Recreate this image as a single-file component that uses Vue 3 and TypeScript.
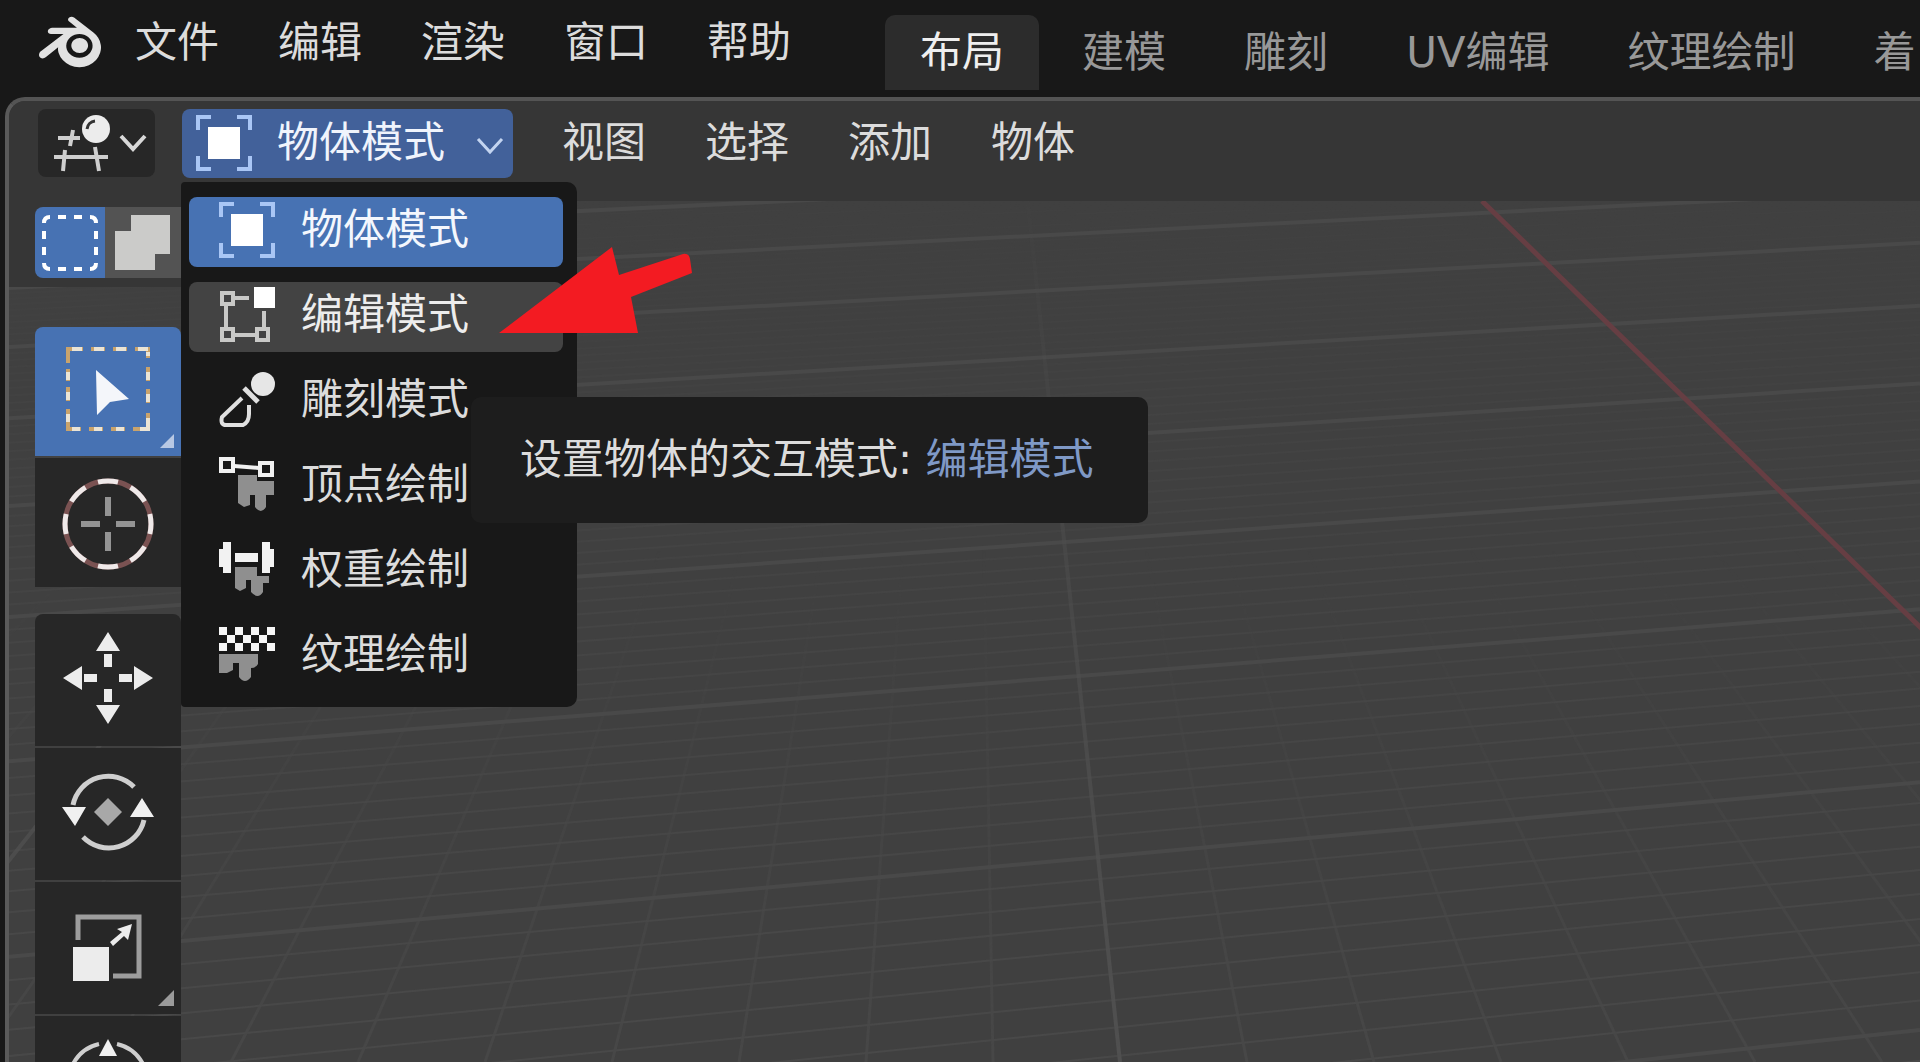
<script setup lang="ts">
import { ref } from 'vue'

interface Mode {
  id: string
  label: string
}

interface GridLine {
  x1: number
  y1: number
  x2: number
  y2: number
  major: boolean
}

const mainMenus: string[] = ['文件', '编辑', '渲染', '窗口', '帮助']
const workspaces: string[] = ['布局', '建模', '雕刻', 'UV编辑', '纹理绘制', '着']
const viewMenus: string[] = ['视图', '选择', '添加', '物体']
const modes: Mode[] = [
  { id: 'object', label: '物体模式' },
  { id: 'edit', label: '编辑模式' },
  { id: 'sculpt', label: '雕刻模式' },
  { id: 'vertex', label: '顶点绘制' },
  { id: 'weight', label: '权重绘制' },
  { id: 'texture', label: '纹理绘制' },
]

const activeWorkspace = ref('布局')
const activeMode = ref('object')
const hoveredMode = ref('edit')
const menuOpen = ref(true)

function labelOf(id: string): string {
  return modes.find((m) => m.id === id)?.label ?? ''
}

function chooseMode(id: string): void {
  activeMode.value = id
  menuOpen.value = false
}

// Floor lines running across the view, receding towards the horizon.
const crossLines: GridLine[] = []
for (let i = 0; i <= 90; i++) {
  const depth = 4.325 + i / 10
  const nearY = -353 + 6817 / depth
  const farY = -364 + 6447 / depth
  const slope = (farY - nearY) / 840
  crossLines.push({
    x1: 0,
    y1: nearY - slope * 1080,
    x2: 1920,
    y2: farY,
    major: i % 10 === 3,
  })
}

// Floor lines running away from the viewer, meeting at one vanishing point.
const depthLines: GridLine[] = []
for (let k = -26; k <= 24; k++) {
  if (k === 10) continue
  const spread = 152 + 127 * k
  depthLines.push({
    x1: 968 + (spread * 500) / 1417,
    y1: 145,
    x2: 968 + spread,
    y2: 1062,
    major: k % 10 === 0,
  })
}
const minorCross = crossLines.filter((l) => !l.major)
const minorDepth = depthLines.filter((l) => !l.major)
const majorCross = crossLines.filter((l) => l.major)
const majorDepth = depthLines.filter((l) => l.major)
</script>

<template>
  <div class="app">
    <header class="topbar">
      <svg class="logo" viewBox="0 0 24 24" aria-hidden="true">
        <path
          d="M12.51 13.214c.046-.8.438-1.506 1.03-2.006a3.424 3.424 0 0 1 2.212-.79c.85 0 1.631.3 2.211.79.592.5.983 1.206 1.028 2.005.045.823-.285 1.586-.865 2.153a3.389 3.389 0 0 1-2.374.938 3.393 3.393 0 0 1-2.376-.938c-.58-.567-.91-1.33-.865-2.152M7.35 14.831c.006.314.106.922.256 1.398a7.372 7.372 0 0 0 1.593 2.757 8.227 8.227 0 0 0 2.787 2.001 8.947 8.947 0 0 0 3.66.76 8.964 8.964 0 0 0 3.657-.772 8.285 8.285 0 0 0 2.785-2.01 7.428 7.428 0 0 0 1.592-2.762 6.964 6.964 0 0 0 .25-3.074 7.123 7.123 0 0 0-1.016-2.779 7.764 7.764 0 0 0-1.852-2.043h.002L13.566 2.55l-.02-.015c-.492-.378-1.319-.376-1.86.002-.547.382-.609 1.015-.123 1.415l-.001.001 3.126 2.543-9.53.01h-.013c-.788.001-1.545.518-1.695 1.172-.154.665.38 1.217 1.2 1.22V8.9l4.83-.01-8.62 6.617-.034.025c-.813.622-1.075 1.658-.563 2.313.52.667 1.625.668 2.447.004L7.414 14s-.069.52-.063.831zm12.09 1.741c-.97.988-2.326 1.548-3.795 1.55-1.47.004-2.827-.552-3.797-1.538a4.51 4.51 0 0 1-1.036-1.622 4.282 4.282 0 0 1 .282-3.519 4.702 4.702 0 0 1 1.153-1.371c.942-.768 2.141-1.183 3.396-1.185 1.256-.002 2.455.41 3.398 1.175.48.391.87.854 1.152 1.367a4.28 4.28 0 0 1 .522 1.706 4.236 4.236 0 0 1-.239 1.811 4.54 4.54 0 0 1-1.035 1.626"
        />
      </svg>
      <nav class="menus">
        <button v-for="m in mainMenus" :key="m" class="menu-button" type="button">{{ m }}</button>
      </nav>
      <nav class="tabs">
        <button
          v-for="w in workspaces"
          :key="w"
          class="tab"
          :class="{ 'tab--active': w === activeWorkspace }"
          type="button"
          @click="activeWorkspace = w"
        >
          {{ w }}
        </button>
      </nav>
    </header>

    <main class="editor">
      <svg class="grid" viewBox="9 101 1911 961" preserveAspectRatio="xMinYMin slice" aria-hidden="true">
        <defs>
          <linearGradient id="fade" x1="0" y1="201" x2="0" y2="1062" gradientUnits="userSpaceOnUse">
            <stop offset="0" stop-color="#fff" stop-opacity="0.05" />
            <stop offset="0.35" stop-color="#fff" stop-opacity="0.4" />
            <stop offset="1" stop-color="#fff" stop-opacity="1" />
          </linearGradient>
          <linearGradient id="fade-depth" x1="0" y1="550" x2="0" y2="1062" gradientUnits="userSpaceOnUse">
            <stop offset="0" stop-color="#fff" stop-opacity="0" />
            <stop offset="1" stop-color="#fff" stop-opacity="0.9" />
          </linearGradient>
          <mask id="floor" maskUnits="userSpaceOnUse" x="0" y="101" width="1920" height="961">
            <rect x="0" y="101" width="1920" height="961" fill="url(#fade)" />
          </mask>
          <mask id="floor-depth" maskUnits="userSpaceOnUse" x="0" y="101" width="1920" height="961">
            <rect x="0" y="101" width="1920" height="961" fill="url(#fade-depth)" />
          </mask>
        </defs>
        <g mask="url(#floor)" stroke="#494949" stroke-width="2">
          <line v-for="(l, i) in minorCross" :key="i" :x1="l.x1" :y1="l.y1" :x2="l.x2" :y2="l.y2" />
        </g>
        <g mask="url(#floor-depth)" stroke="#484848" stroke-width="3">
          <line v-for="(l, i) in minorDepth" :key="i" :x1="l.x1" :y1="l.y1" :x2="l.x2" :y2="l.y2" />
        </g>
        <g stroke="#494949" stroke-width="4">
          <line v-for="(l, i) in majorCross" :key="i" :x1="l.x1" :y1="l.y1" :x2="l.x2" :y2="l.y2" />
        </g>
        <g mask="url(#floor)" stroke="#505050" stroke-width="4">
          <line v-for="(l, i) in majorDepth" :key="i" :x1="l.x1" :y1="l.y1" :x2="l.x2" :y2="l.y2" />
        </g>
        <line x1="1482" y1="201" x2="1924" y2="631" stroke="#663e43" stroke-width="5" />
      </svg>

      <div class="view-header">
        <button class="editor-type" type="button" aria-label="编辑器类型">
          <svg width="56" height="58" viewBox="0 0 56 58" aria-hidden="true">
            <g fill="none" stroke="#cfcfcf" stroke-width="4">
              <path d="M0 43H54M4 24H26M19 16L16 32M11 36L9 57M41 33L45 57" />
            </g>
            <circle cx="42" cy="15" r="14" fill="#ececec" />
            <path d="M33 15a9 9 0 0 1 8-8" fill="none" stroke="#333" stroke-width="3" />
          </svg>
          <svg width="28" height="18" viewBox="0 0 28 18" aria-hidden="true">
            <path d="M2 2L14 15L26 2" fill="none" stroke="#d8d8d8" stroke-width="4" />
          </svg>
        </button>

        <div class="mode">
          <button
            class="mode-button"
            type="button"
            aria-haspopup="menu"
            :aria-expanded="menuOpen"
            @click="menuOpen = !menuOpen"
          >
            <svg width="56" height="56" viewBox="0 0 56 56" aria-hidden="true">
              <path d="M2 15V2H15M41 2H54V15M54 41V54H41M15 54H2V41" fill="none" stroke="#a9c6f5" stroke-width="4" />
              <rect x="12" y="12" width="32" height="32" fill="#fff" />
            </svg>
            <span class="mode-name">{{ labelOf(activeMode) }}</span>
            <svg class="mode-chevron" width="28" height="18" viewBox="0 0 28 18" aria-hidden="true">
              <path d="M2 2L14 15L26 2" fill="none" stroke="#c3d4f0" stroke-width="3" />
            </svg>
          </button>

          <ul v-if="menuOpen" class="mode-menu" role="menu">
            <li v-for="m in modes" :key="m.id" role="none">
              <button
                class="mode-item"
                :class="{
                  'mode-item--active': m.id === activeMode,
                  'mode-item--hover': m.id === hoveredMode && m.id !== activeMode,
                }"
                type="button"
                role="menuitem"
                @mouseenter="hoveredMode = m.id"
                @click="chooseMode(m.id)"
              >
                <svg width="56" height="56" viewBox="0 0 56 56" aria-hidden="true">
                  <template v-if="m.id === 'object'">
                    <path
                      d="M2 15V2H15M41 2H54V15M54 41V54H41M15 54H2V41"
                      fill="none"
                      stroke="#a9c6f5"
                      stroke-width="4"
                    />
                    <rect x="12" y="12" width="32" height="32" fill="#fff" />
                  </template>
                  <template v-else-if="m.id === 'edit'">
                    <g fill="none" stroke="#c9c9c7" stroke-width="4">
                      <path d="M16 11H30M7 19V40M15 48H36M45 24V40" />
                      <rect x="3" y="6" width="11" height="11" />
                      <rect x="3" y="42" width="11" height="11" />
                      <rect x="38" y="42" width="11" height="11" />
                    </g>
                    <rect x="35" y="0" width="21" height="21" fill="#fff" />
                  </template>
                  <template v-else-if="m.id === 'sculpt'">
                    <circle cx="44" cy="12" r="12" fill="#e6e6e6" />
                    <g fill="none" stroke="#e0e0e0" stroke-width="4">
                      <path d="M25 16L39 30" stroke-width="5" />
                      <path d="M23 26L3 45Q1 53 7 53H24Q30 50 30 42V33" />
                    </g>
                  </template>
                  <template v-else-if="m.id === 'vertex'">
                    <path
                      d="M19 18H38V24H55V38H47V50Q42 58 36 50V38H31V48L25 50L19 46Z"
                      fill="#8f8f8f"
                    />
                    <g fill="none" stroke="#f0f0f0" stroke-width="4">
                      <rect x="2" y="2" width="12" height="12" />
                      <rect x="41" y="6" width="12" height="12" />
                      <path d="M15 9L40 11" />
                    </g>
                  </template>
                  <template v-else-if="m.id === 'weight'">
                    <path d="M16 25H38V34H50V41H44V50Q39 58 32 50V38H27V46L21 49L16 46Z" fill="#8f8f8f" />
                    <path
                      d="M4 0H12V31H4V25H0V7H4ZM16 11H39V20H16ZM43 0H51V7H55V25H51V31H43Z"
                      fill="#f2f2f2"
                    />
                  </template>
                  <template v-else>
                    <path
                      d="M0 0h8v8h-8zM16 0h8v8h-8zM32 0h8v8h-8zM48 0h8v8h-8zM8 8h8v8h-8zM24 8h8v8h-8zM40 8h8v8h-8zM0 16h8v8h-8zM16 16h8v8h-8zM32 16h8v8h-8zM48 16h8v8h-8z"
                      fill="#f6f6f6"
                    />
                    <path d="M0 27H39V37Q37 41 32 41V50Q26 58 20 50V36H14V43L8 46H0Z" fill="#8f8f8f" />
                  </template>
                </svg>
                <span>{{ m.label }}</span>
              </button>
            </li>
          </ul>
        </div>

        <nav class="menus menus--view">
          <button v-for="m in viewMenus" :key="m" class="menu-button" type="button">{{ m }}</button>
        </nav>
      </div>

      <div class="tool-settings">
        <button class="select-mode select-mode--active" type="button" aria-label="设置新选择">
          <svg width="56" height="56" viewBox="0 0 56 56" aria-hidden="true">
            <path
              d="M2 8Q2 2 8 2M16 2H24M32 2H40M48 2Q54 2 54 8M54 16V24M54 32V40M54 48Q54 54 48 54M40 54H32M24 54H16M8 54Q2 54 2 48M2 40V32M2 24V16"
              fill="none"
              stroke="#fff"
              stroke-width="4"
            />
          </svg>
        </button>
        <button class="select-mode" type="button" aria-label="扩展选择">
          <svg width="56" height="56" viewBox="0 0 56 56" aria-hidden="true">
            <path d="M16 0H55V39H40V55H0V16H16Z" fill="#cbcbc9" />
          </svg>
        </button>
      </div>

      <div class="toolbar">
        <div class="tool-group tool-group--select">
          <button class="tool tool--active" type="button" aria-label="框选">
            <svg width="96" height="96" viewBox="0 0 96 96" aria-hidden="true">
              <g fill="none" stroke-width="4">
                <rect x="8" y="5" width="80" height="80" stroke="#c9a36c" />
                <path
                  d="M12 5H22M34 5H44M56 5H66M78 5H88M88 8V12M88 28V36M88 50V58M88 74V85H80M64 85H56M42 85H34M20 85H12M8 78V70M8 56V48M8 36V28"
                  stroke="#ebe4d5"
                />
                <path
                  d="M23 5H31M45 5H53M67 5H75M88 14V23M88 37V45M88 59V69M73 85H65M51 85H43M29 85H21M8 65V57M8 43V37M8 25V19"
                  stroke="#4772b3"
                />
              </g>
              <path d="M36 26L69 55L50 58L37 71Z" fill="#f4f6fa" />
            </svg>
            <svg class="corner" width="16" height="16" viewBox="0 0 16 16" aria-hidden="true">
              <path d="M16 2V16H2Z" fill="#b8c8e4" />
            </svg>
          </button>
          <button class="tool" type="button" aria-label="游标">
            <svg width="96" height="96" viewBox="0 0 96 96" aria-hidden="true">
              <circle cx="48" cy="49" r="43" fill="none" stroke="#7a5252" stroke-width="5" />
              <circle
                cx="48"
                cy="49"
                r="43"
                fill="none"
                stroke="#efe9e9"
                stroke-width="5"
                pathLength="160"
                stroke-dasharray="12 8"
                stroke-dashoffset="6"
              />
              <path d="M48 22V41M48 57V76M21 49H40M56 49H75" fill="none" stroke="#949494" stroke-width="6" />
            </svg>
          </button>
        </div>

        <div class="tool-group">
          <button class="tool" type="button" aria-label="移动">
            <svg width="96" height="96" viewBox="0 0 96 96" aria-hidden="true">
              <path
                d="M48 0L60 19H36ZM48 92L60 73H36ZM3 46L22 34V58ZM93 46L74 34V58ZM44 22H52V35H44ZM44 57H52V70H44ZM24 42H37V50H24ZM59 42H72V50H59Z"
                fill="#ececec"
              />
            </svg>
          </button>
          <button class="tool" type="button" aria-label="旋转">
            <svg width="96" height="96" viewBox="0 0 96 96" aria-hidden="true">
              <path d="M13 39A36 36 0 0 1 74 21M84 54A36 36 0 0 1 23 71" fill="none" stroke="#cfcfcf" stroke-width="5" />
              <path d="M2 41H26L15 60ZM70 51H94L82 32Z" fill="#f0f0f0" />
              <path d="M48 32L62 46L48 60L34 46Z" fill="#a8a8a8" />
            </svg>
          </button>
          <button class="tool" type="button" aria-label="缩放">
            <svg width="96" height="96" viewBox="0 0 96 96" aria-hidden="true">
              <path d="M18 40V17H79V76H53" fill="none" stroke="#9d9d9d" stroke-width="5" />
              <rect x="13" y="47" width="36" height="34" fill="#ececec" />
              <path d="M50 42L62 32L57 29L72 24L68 40L64 36L53 46Z" fill="#ececec" />
            </svg>
            <svg class="corner" width="16" height="16" viewBox="0 0 16 16" aria-hidden="true">
              <path d="M16 0V16H0Z" fill="#9a9a9a" />
            </svg>
          </button>
          <button class="tool" type="button" aria-label="变换">
            <svg width="96" height="96" viewBox="0 0 96 96" aria-hidden="true">
              <path d="M12 32A40 40 0 0 1 39 10M57 10A40 40 0 0 1 84 32" fill="none" stroke="#cfcfcf" stroke-width="4" />
              <path d="M48 5L57 22H39Z" fill="#f0f0f0" />
              <path d="M48 32L62 46L48 60L34 46Z" fill="#a8a8a8" />
            </svg>
          </button>
        </div>
      </div>

      <div v-if="menuOpen" class="tooltip" role="tooltip">
        设置物体的交互模式: <span class="tooltip-value">{{ labelOf(hoveredMode) }}</span>
      </div>

      <svg v-if="menuOpen" class="pointer" width="210" height="100" viewBox="0 0 210 100" aria-hidden="true">
        <path d="M9 93L122 7L129 35L193 14Q199 13 200 19L202 33L141 57L148 93Z" fill="#f31b22" />
      </svg>
    </main>
  </div>
</template>

<style>
body {
  margin: 0;
  background: #181818;
}
</style>

<style scoped>
.app {
  display: flex;
  flex-direction: column;
  height: 100vh;
  overflow: hidden;
  background: #181818;
  color: #dcdcdc;
  font-family: 'DejaVu Sans', 'Noto Sans CJK SC', sans-serif;
  font-size: 42px;
  line-height: 64px;
}

button {
  margin: 0;
  padding: 0;
  border: 0;
  background: none;
  color: inherit;
  font: inherit;
  white-space: nowrap;
  cursor: pointer;
}

svg {
  display: block;
  flex: none;
}

.topbar {
  display: flex;
  flex: none;
  height: 97px;
  padding-left: 39px;
  overflow: hidden;
}

.logo {
  width: 62px;
  height: 62px;
  margin-top: 11px;
  fill: #e2e2e2;
}

.menus {
  display: flex;
  flex: none;
  align-items: center;
  gap: 59px;
}

.topbar .menus {
  height: 86px;
  margin-left: 34px;
}

.menus--view {
  margin-left: 49px;
}

.tabs {
  display: flex;
  flex: none;
  gap: 8px;
  margin-left: 94px;
  padding-top: 15px;
}

.tab {
  height: 75px;
  padding: 0 35px;
  border-radius: 10px 10px 0 0;
  color: #989898;
}

.tab--active {
  background: #2c2c2c;
  color: #efefef;
}

.editor {
  position: relative;
  flex: 1;
  min-height: 0;
  margin-left: 5px;
  overflow: hidden;
  border-top: 4px solid #545454;
  border-left: 4px solid #5a5a5a;
  border-top-left-radius: 20px;
  background: #404040;
}

.grid {
  position: absolute;
  top: 0;
  left: 0;
  width: 100%;
  height: 100%;
}

.view-header {
  position: relative;
  z-index: 2;
  display: flex;
  align-items: center;
  height: 84px;
  padding: 0 0 16px 29px;
  background: #363636;
}

.editor-type {
  display: flex;
  align-items: center;
  gap: 9px;
  width: 117px;
  height: 68px;
  margin-right: 27px;
  padding-left: 16px;
  border-radius: 8px;
  background: #272727;
}

.mode {
  position: relative;
  flex: none;
}

.mode-button {
  display: flex;
  align-items: center;
  width: 331px;
  height: 69px;
  padding: 0 9px 0 14px;
  border-radius: 8px;
  background: #42619a;
  color: #f0f4fc;
}

.mode-name {
  flex: 1;
  padding-left: 25px;
  text-align: left;
}

.mode-chevron {
  margin-top: 6px;
}

.mode-menu {
  position: absolute;
  top: 73px;
  left: -1px;
  display: flex;
  flex-direction: column;
  gap: 15px;
  width: 374px;
  margin: 0;
  padding: 15px 14px 15px 8px;
  border-radius: 4px 10px 10px 4px;
  background: #181818;
  list-style: none;
}

.mode-item {
  display: flex;
  align-items: center;
  gap: 26px;
  width: 100%;
  height: 70px;
  padding: 0 0 4px 30px;
  border-radius: 8px;
  color: #dcdcdc;
}

.mode-item--active {
  background: #4772b3;
  color: #f4f7fd;
}

.mode-item--hover {
  background: #434343;
  color: #ededed;
}

.tool-settings {
  position: relative;
  display: flex;
  width: 172px;
  height: 80px;
  padding: 6px 0 0 26px;
  background: #363636;
}

.select-mode {
  display: flex;
  align-items: center;
  justify-content: center;
  width: 76px;
  height: 71px;
  background: #535353;
}

.select-mode--active {
  width: 70px;
  border-radius: 8px 0 0 8px;
  background: #4772b3;
}

.toolbar {
  position: relative;
  display: flex;
  flex-direction: column;
  gap: 27px;
  width: 146px;
  padding: 40px 0 0 26px;
}

.tool-group {
  display: flex;
  flex-direction: column;
  gap: 2px;
}

.tool {
  position: relative;
  display: flex;
  align-items: center;
  justify-content: center;
  width: 146px;
  height: 132px;
  background: #272727;
}

.tool-group--select .tool {
  height: 129px;
}

.tool:first-child {
  border-radius: 8px 8px 0 0;
}

.tool.tool--active {
  background: #4772b3;
}

.corner {
  position: absolute;
  right: 7px;
  bottom: 8px;
}

.tooltip {
  position: absolute;
  z-index: 3;
  top: 296px;
  left: 462px;
  padding: 31px 54px 31px 49px;
  border-radius: 10px;
  background: #1d1d1d;
  color: #dcdcdc;
  white-space: nowrap;
}

.tooltip-value {
  color: #7f99c6;
}

.pointer {
  position: absolute;
  z-index: 4;
  top: 139px;
  left: 481px;
}
</style>
